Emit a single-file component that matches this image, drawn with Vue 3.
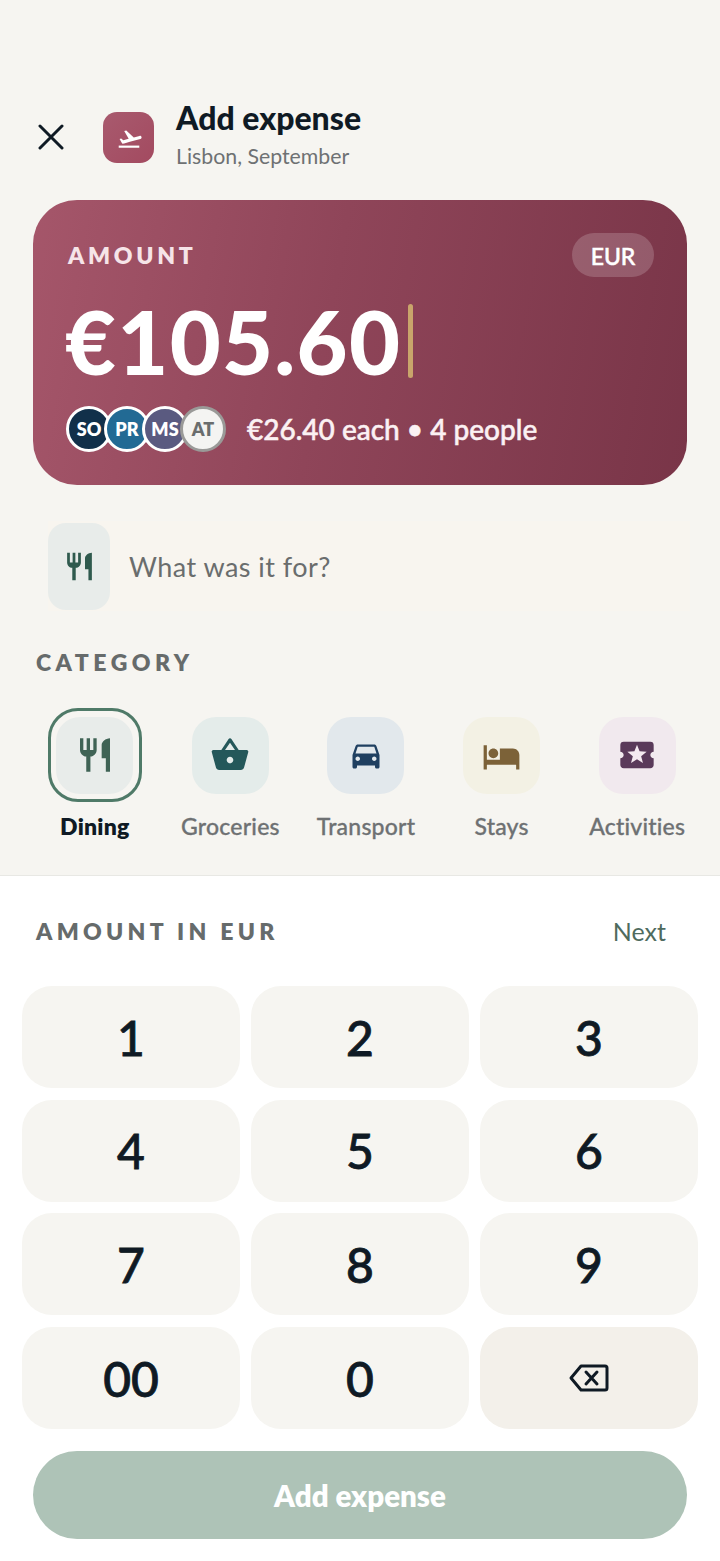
<script setup>
const people = [
  { t: 'SO', c: 'so' },
  { t: 'PR', c: 'pr' },
  { t: 'MS', c: 'ms' },
  { t: 'AT', c: 'at' }
]
const cats = [
  { n: 'Dining', k: 'dining', on: true },
  { n: 'Groceries', k: 'groc' },
  { n: 'Transport', k: 'trans' },
  { n: 'Stays', k: 'stay' },
  { n: 'Activities', k: 'act' }
]
const keys = ['1', '2', '3', '4', '5', '6', '7', '8', '9', '00', '0']
</script>

<template>
  <div class="page">
    <header class="head">
      <svg class="close" viewBox="0 0 26 26" width="26" height="26"><path d="M2 2 24 24M24 2 2 24" stroke="#0f1a24" stroke-width="3" stroke-linecap="round" fill="none"/></svg>
      <div class="trip">
        <svg viewBox="0 0 24 24" width="26" height="26"><path fill="#fff" d="M2.5 19h19v2h-19z"/><path fill="#fff" d="M22.07 13.64c-.21-.8-1.04-1.28-1.84-1.06L14.92 14 8 7.57l-1.93.51 4.14 7.17-4.97 1.33-1.97-1.54-1.45.39 1.82 3.16.77 1.33 1.6-.43 5.31-1.42 4.35-1.16L21 15.5c.81-.23 1.28-1.05 1.07-1.86z" transform="translate(1.5 -2.5)"/></svg>
      </div>
      <div class="titles">
        <div class="title">Add expense</div>
        <div class="sub">Lisbon, September</div>
      </div>
    </header>

    <section class="card">
      <div class="card-top">
        <span class="amt-label">AMOUNT</span>
        <span class="pill">EUR</span>
      </div>
      <div class="amt-row">
        <span class="amt">€105.60</span>
        <i class="caret"></i>
      </div>
      <div class="split">
        <div class="avatars">
          <span v-for="p in people" :key="p.t" class="av" :class="p.c">{{ p.t }}</span>
        </div>
        <span class="each">€26.40 each • 4 people</span>
      </div>
    </section>

    <div class="desc">
      <div class="desc-ic">
        <svg viewBox="0 0 24 24" width="33" height="33"><path fill="#2f5a4e" d="M11 9H9V2H7v7H5V2H3v7c0 2.12 1.66 3.84 3.75 3.97V22h2.5v-9.03C11.34 12.84 13 11.12 13 9V2h-2v7zm5-3v8h2.5v8H21V2c-2.76 0-5 2.24-5 4z"/></svg>
      </div>
      <span class="desc-t">What was it for?</span>
    </div>

    <div class="sec-label">CATEGORY</div>
    <div class="cats">
      <div v-for="c in cats" :key="c.n" class="cat" :class="{ on: c.on }">
        <div class="cat-ic-wrap">
          <div class="cat-ic" :class="c.k">
            <svg v-if="c.k === 'dining'" viewBox="0 0 24 24" width="40" height="40"><path fill="#3f6355" d="M11 9H9V2H7v7H5V2H3v7c0 2.12 1.66 3.84 3.75 3.97V22h2.5v-9.03C11.34 12.84 13 11.12 13 9V2h-2v7zm5-3v8h2.5v8H21V2c-2.76 0-5 2.24-5 4z"/></svg>
            <svg v-else-if="c.k === 'groc'" viewBox="0 0 24 24" width="40" height="40"><path fill="#24585a" d="M17.21 9l-4.38-6.56a1 1 0 0 0-1.66-.01L6.79 9H2c-.55 0-1 .45-1 1l.04.27 2.54 9.27c.23.84 1 1.46 1.92 1.46h13c.92 0 1.69-.62 1.93-1.46l2.54-9.27L23 10c0-.55-.45-1-1-1h-4.79zM9 9l3-4.4L15 9H9zm3 8c-1.1 0-2-.9-2-2s.9-2 2-2 2 .9 2 2-.9 2-2 2z"/></svg>
            <svg v-else-if="c.k === 'trans'" viewBox="0 0 24 24" width="36" height="36"><path fill="#1f3f60" d="M18.92 6.01C18.72 5.42 18.16 5 17.5 5h-11c-.66 0-1.21.42-1.42 1.01L3 12v8c0 .55.45 1 1 1h1c.55 0 1-.45 1-1v-1h12v1c0 .55.45 1 1 1h1c.55 0 1-.45 1-1v-8l-2.08-5.99zM6.5 16c-.83 0-1.5-.67-1.5-1.5S5.67 13 6.5 13s1.5.67 1.5 1.5S7.33 16 6.5 16zm11 0c-.83 0-1.5-.67-1.5-1.5s.67-1.5 1.5-1.5 1.5.67 1.5 1.5-.67 1.5-1.5 1.5zM5 11l1.5-4.5h11L19 11H5z"/></svg>
            <svg v-else-if="c.k === 'stay'" class="stay-svg" viewBox="0 0 24 24" width="39" height="39"><path fill="#7c6238" d="M7 13c1.66 0 3-1.34 3-3S8.66 7 7 7s-3 1.34-3 3 1.34 3 3 3zm12-6h-8v7H3V5H1v15h2v-3h18v3h2v-9c0-2.21-1.79-4-4-4z"/></svg>
            <svg v-else viewBox="0 0 24 24" width="40" height="40"><path fill="#5a3a5a" d="M22 10V6a2 2 0 0 0-2-2H4a2 2 0 0 0-2 2v4c1.1 0 2 .9 2 2s-.9 2-2 2v4c0 1.1.9 2 2 2h16c1.1 0 2-.9 2-2v-4c-1.1 0-2-.9-2-2s.9-2 2-2z"/><path fill="#f4e9f0" d="M15.58 16.8 12 14.5l-3.58 2.3 1.08-4.12-3.29-2.69 4.24-.25L12 5.8l1.54 3.95 4.24.25-3.29 2.69z"/></svg>
          </div>
        </div>
        <div class="cat-n">{{ c.n }}</div>
      </div>
    </div>

    <section class="sheet">
      <div class="sheet-head">
        <span class="sheet-label">AMOUNT IN EUR</span>
        <span class="next">Next</span>
      </div>
      <div class="pad">
        <button v-for="k in keys" :key="k" class="key">{{ k }}</button>
        <button class="key back" aria-label="Backspace">
          <svg viewBox="0 0 42 32" width="42" height="32"><path d="M13 4h24a2 2 0 0 1 2 2v20a2 2 0 0 1-2 2H13L3 16z" fill="none" stroke="#0f1a24" stroke-width="3" stroke-linejoin="round"/><path d="M18 10l11 12M29 10 18 22" stroke="#0f1a24" stroke-width="3" stroke-linecap="round"/></svg>
        </button>
      </div>
      <button class="cta">Add expense</button>
    </section>
  </div>
</template>

<style>
html, body { margin: 0; background: #f6f5f1; }
</style>

<style scoped>
.page {
  width: 720px;
  height: 1561px;
  background: #f6f5f1;
  font-family: Lato, "Open Sans", sans-serif;
  color: #0f1a24;
  display: flex;
  flex-direction: column;
  overflow: hidden;
}
.head {
  height: 200px;
  flex: none;
  box-sizing: border-box;
  padding: 97px 0 0 38px;
  display: flex;
  align-items: flex-start;
}
.close { margin-top: 27px; flex: none; }
.trip {
  width: 51px; height: 51px; margin: 15px 0 0 39px;
  border-radius: 14px;
  background: linear-gradient(135deg, #a85a6e, #a34a60);
  display: flex; align-items: center; justify-content: center;
  flex: none;
}
.titles { margin-left: 22px; }
.title { font-size: 32px; font-weight: 900; line-height: 42px; }
.sub { font-size: 21.3px; line-height: 30px; color: #6e7173; margin-top: 2px; }
.card {
  margin: 0 33px;
  height: 285px;
  box-sizing: border-box;
  padding: 33px 33px 0 35px;
  border-radius: 44px;
  background: linear-gradient(100deg, #a5566a 0%, #8f4559 45%, #793548 100%);
  color: #fff;
  flex: none;
}
.card-top { display: flex; justify-content: space-between; align-items: flex-start; }
.amt-label { font-size: 23px; font-weight: 800; letter-spacing: 3.7px; color: #f6e4e8; line-height: 44px; }
.pill {
  width: 82px; height: 44px; border-radius: 22px;
  background: rgba(255,255,255,.18);
  font-size: 23px; font-weight: 500; -webkit-text-stroke: .5px #fff; text-align: center; line-height: 46px;
}
.amt-row { display: flex; align-items: center; height: 74px; margin: 27px 0 0 -3px; }
.amt { font-size: 88px; font-weight: 900; line-height: 74px; letter-spacing: 1.3px; }
.caret { width: 5px; height: 74px; background: #c9a56b; border-radius: 3px; margin-left: 7px; }
.split { display: flex; align-items: center; margin: 28px 0 0 -2px; }
.avatars { display: flex; }
.av {
  width: 46px; height: 46px; box-sizing: border-box;
  border: 3px solid #fff; border-radius: 50%;
  margin-right: -8px;
  display: flex; align-items: center; justify-content: center;
  font-size: 18px; font-weight: 800; color: #fff;
}
.so { background: #11304a; }
.pr { background: #226a94; }
.ms { background: #5a5a80; }
.at { background: #f4f4f2; color: #6a6d6d; border-color: #9a9a98; }
.each { font-size: 28px; font-weight: 500; margin-left: 29px; color: #fbf1f3; -webkit-text-stroke: .5px #fbf1f3; }
.desc {
  margin: 36px 30px 0 48px;
  height: 90px;
  display: flex; align-items: center;
  background: #f8f5ef;
  flex: none;
}
.desc-ic {
  width: 62px; height: 87px; border-radius: 18px;
  background: #e8ecea;
  display: flex; align-items: center; justify-content: center;
}
.desc-t { font-size: 27px; letter-spacing: .45px; color: #6a6d6d; margin-left: 19px; }
.sec-label { flex: none; margin: 37px 0 0 36px; font-size: 23px; font-weight: 800; letter-spacing: 4.5px; color: #666b6b; line-height: 28px; }
.cats { flex: none; display: flex; padding-left: 27px; margin-top: 32px; }
.cat { width: 135.6px; display: flex; flex-direction: column; align-items: center; flex: none; }
.cat-ic-wrap { width: 94px; height: 94px; box-sizing: border-box; display: flex; align-items: center; justify-content: center; border-radius: 30px; }
.on .cat-ic-wrap { border: 3.5px solid #4f7a68; }
.cat-ic { width: 77px; height: 77px; border-radius: 24px; display: flex; align-items: center; justify-content: center; flex: none; }
.stay-svg { margin-top: 2px; }
.dining { background: #e8ecea; }
.groc { background: #e4ecea; }
.trans { background: #e2e8ec; }
.stay { background: #f3f1e4; }
.act { background: #f1e9ee; }
.cat-n { margin-top: 10px; font-size: 23px; line-height: 28px; color: #6e7173; font-weight: 500; letter-spacing: .2px; -webkit-text-stroke: .3px #6e7173; white-space: nowrap; }
.on .cat-n { color: #0f1a24; font-weight: 800; -webkit-text-stroke: 0; }
.sheet {
  margin-top: 35px;
  flex: 1;
  background: #fff;
  border-top: 1px solid #e8e8e4;
  box-sizing: border-box;
  padding: 0 22px;
}
.sheet-head { display: flex; justify-content: space-between; align-items: center; height: 110px; padding: 0 32px 0 14px; }
.sheet-label { font-size: 23px; font-weight: 800; letter-spacing: 4.3px; color: #666b6b; }
.next { font-size: 25px; color: #4f6b5e; }
.pad { display: grid; grid-template-columns: repeat(3, 218px); grid-auto-rows: 102px; gap: 11.7px 11px; }
.key {
  border: 0; border-radius: 30px; background: #f6f5f1;
  font-family: inherit; font-size: 48px; font-weight: 500; color: #0f1a24;
  -webkit-text-stroke: .8px #0f1a24;
  display: flex; align-items: center; justify-content: center; padding: 0;
}
.back { background: #f3f0ea; }
.cta {
  display: block; width: 654px; height: 88px; margin: 22px 0 0 11px;
  border: 0; border-radius: 44px;
  background: #aec3b7; color: #fff;
  font-family: inherit; font-size: 29.5px; font-weight: 800;
}
</style>
